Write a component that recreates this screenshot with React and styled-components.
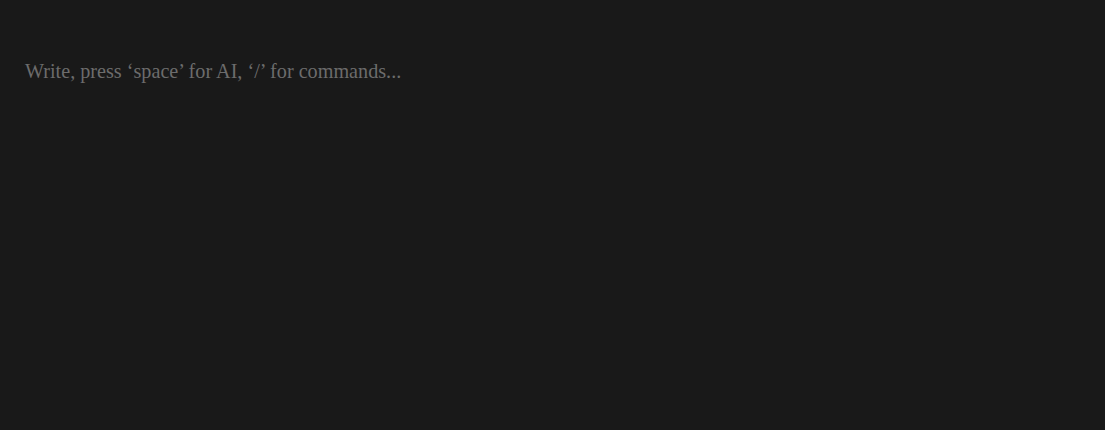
import React from 'react';
import styled, { createGlobalStyle } from 'styled-components';

const GlobalStyle = createGlobalStyle`
  html, body {
    margin: 0;
    padding: 0;
    background: #191919;
  }
`;

const Page = styled.div`
  width: 100%;
  height: 100vh;
  box-sizing: border-box;
  padding: 57px 25px 0;
  background: #191919;
`;

const Placeholder = styled.p`
  margin: 0;
  font-family: 'Liberation Serif', 'Times New Roman', serif;
  font-size: 20.2px;
  line-height: 28px;
  color: #6c6c6c;
`;

export default function App() {
  return (
    <>
      <GlobalStyle />
      <Page>
        <Placeholder>Write, press ‘space’ for AI, ‘/’ for commands...</Placeholder>
      </Page>
    </>
  );
}
